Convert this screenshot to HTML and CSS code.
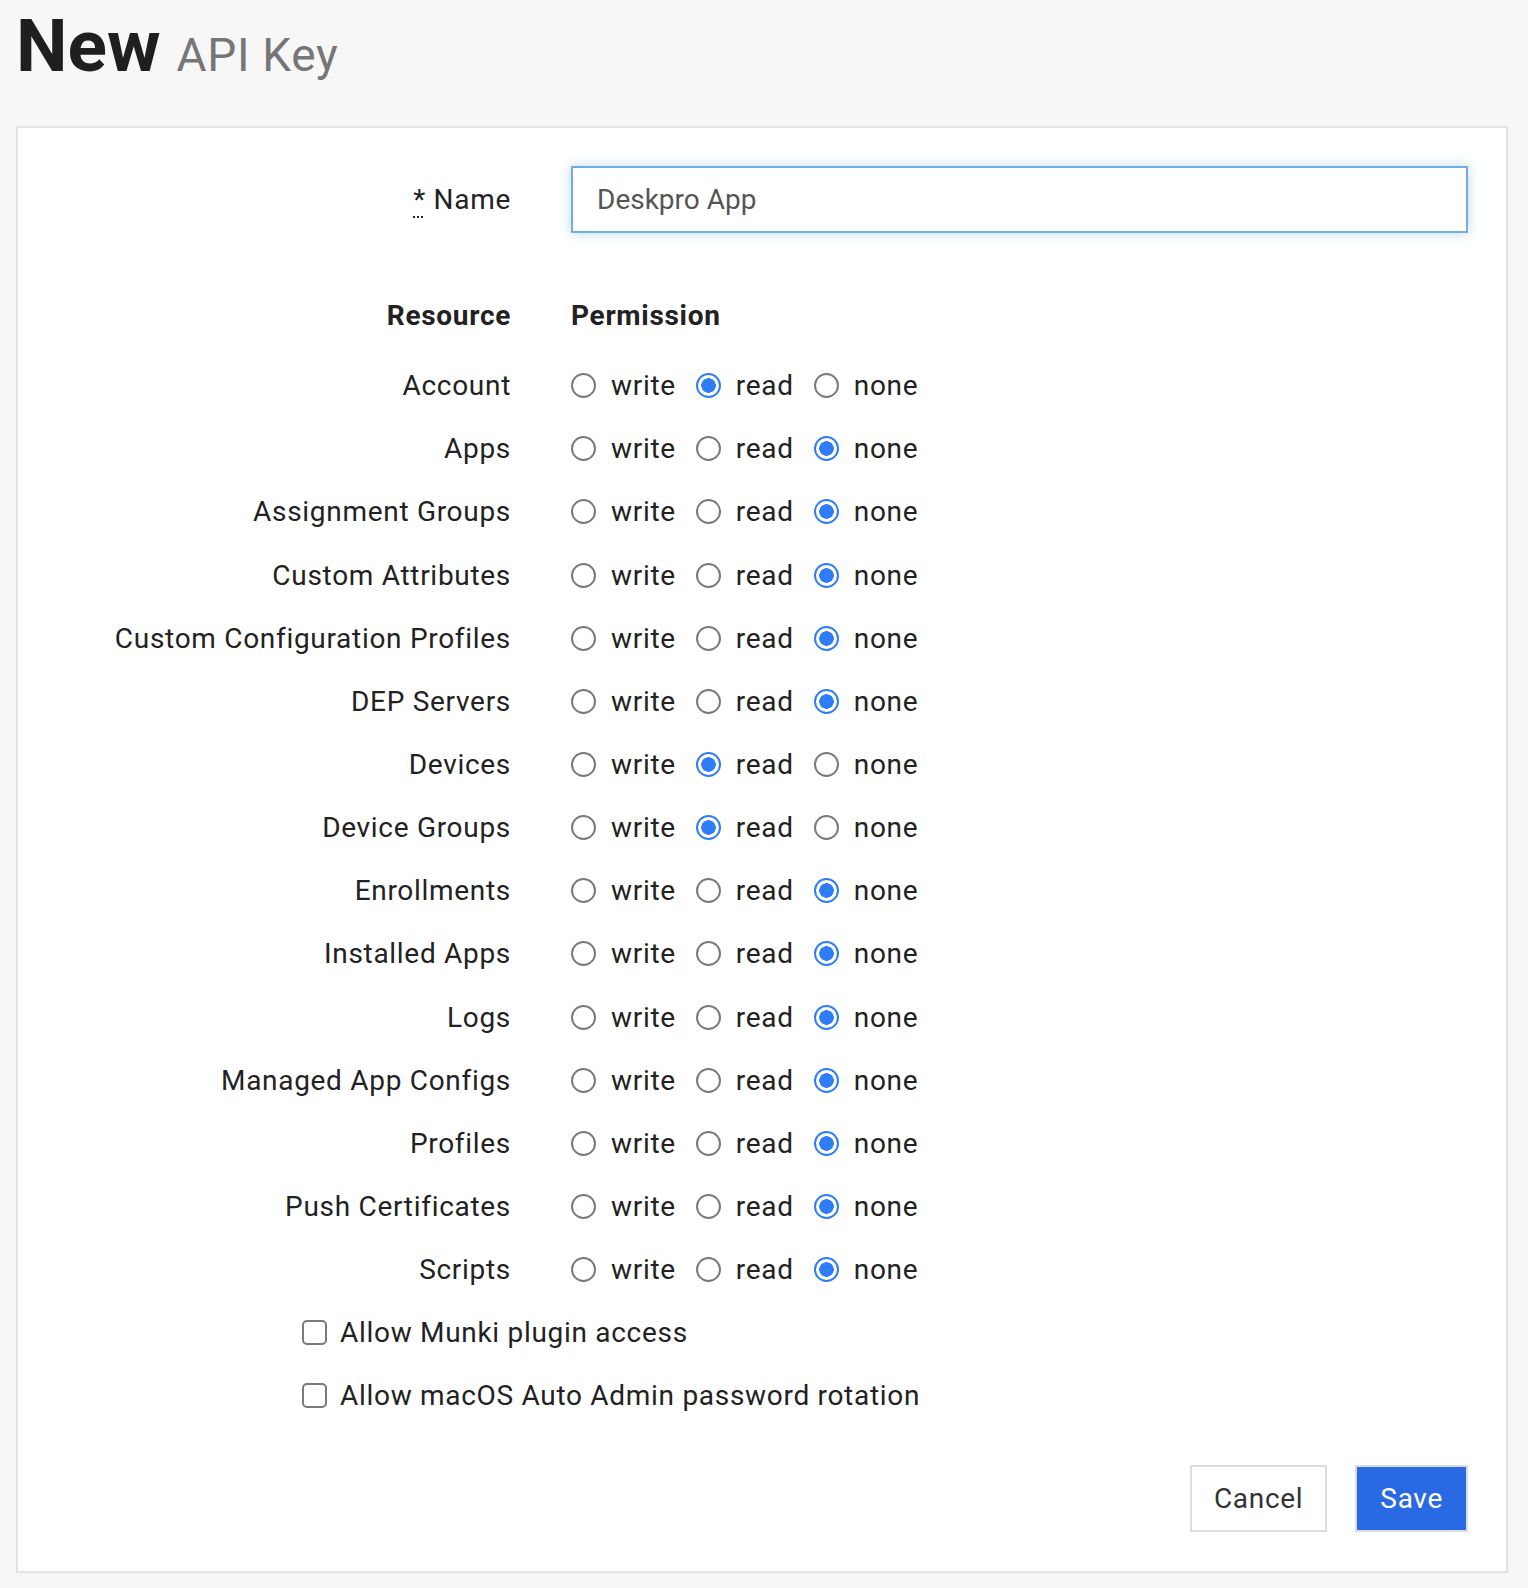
FILE: index.html
```html
<!DOCTYPE html>
<html lang="en">
<head>
<meta charset="utf-8">
<title>New API Key</title>
<link rel="stylesheet" href="styles.css">
</head>
<body>
<h1 class="page-title"><span class="title-main">New</span> <span class="title-sub">API Key</span></h1>
<form class="card">
  <div class="row row-name">
    <label class="label" for="name"><abbr class="req" title="required">*</abbr> Name</label>
    <input id="name" class="text-input" type="text" value="Deskpro App">
  </div>
  <div class="row row-head">
    <div class="label head">Resource</div>
    <div class="head">Permission</div>
  </div>
  <div class="perm-rows">
    <div class="row"><div class="label">Account</div><div class="opts">
      <label class="opt"><input type="radio" name="p1"><span>write</span></label>
      <label class="opt"><input type="radio" name="p1" checked><span>read</span></label>
      <label class="opt"><input type="radio" name="p1"><span>none</span></label></div></div>
    <div class="row"><div class="label">Apps</div><div class="opts">
      <label class="opt"><input type="radio" name="p2"><span>write</span></label>
      <label class="opt"><input type="radio" name="p2"><span>read</span></label>
      <label class="opt"><input type="radio" name="p2" checked><span>none</span></label></div></div>
    <div class="row"><div class="label">Assignment Groups</div><div class="opts">
      <label class="opt"><input type="radio" name="p3"><span>write</span></label>
      <label class="opt"><input type="radio" name="p3"><span>read</span></label>
      <label class="opt"><input type="radio" name="p3" checked><span>none</span></label></div></div>
    <div class="row"><div class="label">Custom Attributes</div><div class="opts">
      <label class="opt"><input type="radio" name="p4"><span>write</span></label>
      <label class="opt"><input type="radio" name="p4"><span>read</span></label>
      <label class="opt"><input type="radio" name="p4" checked><span>none</span></label></div></div>
    <div class="row"><div class="label">Custom Configuration Profiles</div><div class="opts">
      <label class="opt"><input type="radio" name="p5"><span>write</span></label>
      <label class="opt"><input type="radio" name="p5"><span>read</span></label>
      <label class="opt"><input type="radio" name="p5" checked><span>none</span></label></div></div>
    <div class="row"><div class="label">DEP Servers</div><div class="opts">
      <label class="opt"><input type="radio" name="p6"><span>write</span></label>
      <label class="opt"><input type="radio" name="p6"><span>read</span></label>
      <label class="opt"><input type="radio" name="p6" checked><span>none</span></label></div></div>
    <div class="row"><div class="label">Devices</div><div class="opts">
      <label class="opt"><input type="radio" name="p7"><span>write</span></label>
      <label class="opt"><input type="radio" name="p7" checked><span>read</span></label>
      <label class="opt"><input type="radio" name="p7"><span>none</span></label></div></div>
    <div class="row"><div class="label">Device Groups</div><div class="opts">
      <label class="opt"><input type="radio" name="p8"><span>write</span></label>
      <label class="opt"><input type="radio" name="p8" checked><span>read</span></label>
      <label class="opt"><input type="radio" name="p8"><span>none</span></label></div></div>
    <div class="row"><div class="label">Enrollments</div><div class="opts">
      <label class="opt"><input type="radio" name="p9"><span>write</span></label>
      <label class="opt"><input type="radio" name="p9"><span>read</span></label>
      <label class="opt"><input type="radio" name="p9" checked><span>none</span></label></div></div>
    <div class="row"><div class="label">Installed Apps</div><div class="opts">
      <label class="opt"><input type="radio" name="p10"><span>write</span></label>
      <label class="opt"><input type="radio" name="p10"><span>read</span></label>
      <label class="opt"><input type="radio" name="p10" checked><span>none</span></label></div></div>
    <div class="row"><div class="label">Logs</div><div class="opts">
      <label class="opt"><input type="radio" name="p11"><span>write</span></label>
      <label class="opt"><input type="radio" name="p11"><span>read</span></label>
      <label class="opt"><input type="radio" name="p11" checked><span>none</span></label></div></div>
    <div class="row"><div class="label">Managed App Configs</div><div class="opts">
      <label class="opt"><input type="radio" name="p12"><span>write</span></label>
      <label class="opt"><input type="radio" name="p12"><span>read</span></label>
      <label class="opt"><input type="radio" name="p12" checked><span>none</span></label></div></div>
    <div class="row"><div class="label">Profiles</div><div class="opts">
      <label class="opt"><input type="radio" name="p13"><span>write</span></label>
      <label class="opt"><input type="radio" name="p13"><span>read</span></label>
      <label class="opt"><input type="radio" name="p13" checked><span>none</span></label></div></div>
    <div class="row"><div class="label">Push Certificates</div><div class="opts">
      <label class="opt"><input type="radio" name="p14"><span>write</span></label>
      <label class="opt"><input type="radio" name="p14"><span>read</span></label>
      <label class="opt"><input type="radio" name="p14" checked><span>none</span></label></div></div>
    <div class="row"><div class="label">Scripts</div><div class="opts">
      <label class="opt"><input type="radio" name="p15"><span>write</span></label>
      <label class="opt"><input type="radio" name="p15"><span>read</span></label>
      <label class="opt"><input type="radio" name="p15" checked><span>none</span></label></div></div>
  </div>
  <div class="checks">
    <label class="check"><input type="checkbox"><span>Allow Munki plugin access</span></label>
    <label class="check"><input type="checkbox"><span>Allow macOS Auto Admin password rotation</span></label>
  </div>
  <div class="actions">
    <button type="button" class="btn btn-default">Cancel</button>
    <button type="button" class="btn btn-primary">Save</button>
  </div>
</form>
</body>
</html>
```
FILE: styles.css
```css
* { box-sizing: border-box; }

body {
  margin: 0;
  background: #f7f7f7;
  font-family: Roboto, "Liberation Sans", Arial, sans-serif;
  color: #222222;
}

.page-title {
  margin: 0;
  height: 126px;
  padding: 10px 0 0 16px;
  line-height: 84px;
  font-weight: normal;
  white-space: nowrap;
}

.title-main {
  font-size: 73px;
  font-weight: 700;
  color: #1f1f1f;
  line-height: 1;
}

.title-sub {
  font-size: 46px;
  color: #767676;
  line-height: 1;
  letter-spacing: 0.7px;
  margin-left: 8px;
}

.card {
  display: block;
  margin: 0 20px 0 16px;
  background: #ffffff;
  border: 2px solid #e2e2e2;
  padding: 38px 38px 39px 0;
}

.row {
  display: grid;
  grid-template-columns: 493px 1fr;
  column-gap: 60px;
  align-items: center;
  height: 63.15px;
  font-size: 28px;
  letter-spacing: 0.7px;
}

.row-name { height: 67px; }

.row-head {
  margin-top: 51px;
  margin-bottom: 7px;
}

.label {
  text-align: right;
  white-space: nowrap;
}

.head { font-weight: 700; }

.req {
  text-decoration: underline dotted;
  text-underline-offset: 7px;
  text-decoration-thickness: 2px;
  cursor: help;
}

.text-input {
  height: 67px;
  width: 100%;
  border: 2px solid #72abe6;
  box-shadow: 0 0 12px rgba(102, 175, 233, 0.45);
  padding: 0 24px;
  font-family: inherit;
  font-size: 28px;
  letter-spacing: 0;
  color: #555555;
  outline: none;
  background: #fff;
}

.opts {
  display: flex;
  align-items: center;
}

.opt {
  display: inline-flex;
  align-items: center;
  gap: 15px;
  margin-right: 20px;
}

.opt input {
  appearance: none;
  -webkit-appearance: none;
  margin: 0;
  width: 25px;
  height: 25px;
  border: 2px solid #7a7a7a;
  border-radius: 50%;
  background: #fff;
  flex: none;
}

.opt input:checked {
  border-color: #2f7df6;
  background: radial-gradient(circle, #2f7df6 0 7px, #ffffff 7.5px);
}

.checks {
  margin-top: 0;
  padding-left: 284px;
}

.check {
  display: flex;
  align-items: center;
  gap: 13px;
  height: 63.15px;
  font-size: 28px;
  letter-spacing: 0.7px;
}

.check input {
  appearance: none;
  -webkit-appearance: none;
  margin: 0;
  width: 25px;
  height: 25px;
  border: 2px solid #7a7a7a;
  border-radius: 5px;
  background: #fff;
  flex: none;
}

.actions {
  display: flex;
  justify-content: flex-end;
  gap: 28px;
  margin-top: 37px;
}

.btn {
  height: 67px;
  font-family: inherit;
  font-size: 28px;
  letter-spacing: 0.7px;
  border: 2px solid #dddddd;
  border-radius: 0;
  cursor: pointer;
}

.btn-default {
  background: #ffffff;
  color: #333333;
  padding: 0 22px;
}

.btn-primary {
  background: #2969e4;
  color: #ffffff;
  padding: 0 23px;
}
```
